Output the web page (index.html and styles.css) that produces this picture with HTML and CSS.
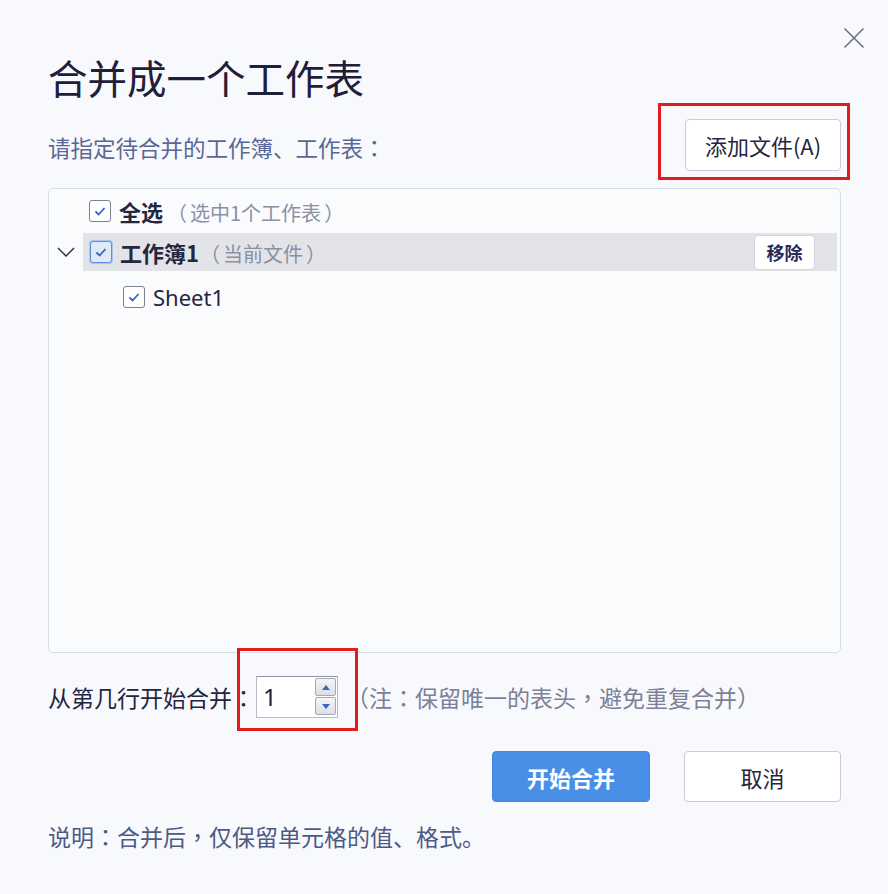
FILE: index.html
```html
<!DOCTYPE html>
<html lang="zh-CN">
<head>
<meta charset="utf-8">
<title>合并成一个工作表</title>
<link rel="stylesheet" href="styles.css">
</head>
<body>
<div class="dialog">
  <div class="close-row">
    <svg class="close" width="22" height="22" viewBox="0 0 22 22"><path d="M1.5 1.5 L20.5 20.5 M20.5 1.5 L1.5 20.5" stroke="#6a6a82" stroke-width="1.5" fill="none"/></svg>
  </div>
  <div class="title">合并成一个工作表</div>
  <div class="sub-row">
    <div class="subtitle">请指定待合并的工作簿、工作表<span class="pc" lang="zh-TW">：</span></div>
    <div class="annot-wrap">
      <button class="btn btn-plain add-btn">添加文件(A)</button>
      <div class="annot annot-add"></div>
    </div>
  </div>
  <div class="list">
    <div class="row row-all">
      <div class="spacer"></div>
      <div class="item">
        <span class="cb"><svg width="20" height="20" viewBox="0 0 20 20"><path d="M5.5 10.5 L8.6 13.5 L14.5 7" stroke="#2f66c8" stroke-width="1.8" fill="none"/></svg></span>
        <span class="text"><span class="label">全选</span><span class="hint hint-all"><span class="pc po" lang="zh-TW">（</span>选中1个工作表<span class="pc pcl" lang="zh-TW">）</span></span></span>
      </div>
    </div>
    <div class="row row-book">
      <div class="spacer"><svg width="18" height="10" viewBox="0 0 18 10"><path d="M1 1 L9 9 L17 1" stroke="#33334a" stroke-width="1.5" fill="none"/></svg></div>
      <div class="item band">
        <span class="cb cb-focus"><svg width="20" height="20" viewBox="0 0 20 20"><path d="M5.5 10.5 L8.6 13.5 L14.5 7" stroke="#2f66c8" stroke-width="1.8" fill="none"/></svg></span>
        <span class="text"><span class="label">工作簿1</span><span class="hint"><span class="pc po" lang="zh-TW">（</span>当前文件<span class="pc pcl" lang="zh-TW">）</span></span></span>
        <button class="remove">移除</button>
      </div>
    </div>
    <div class="row row-sheet">
      <div class="spacer"></div>
      <div class="item indent">
        <span class="cb"><svg width="20" height="20" viewBox="0 0 20 20"><path d="M5.5 10.5 L8.6 13.5 L14.5 7" stroke="#2f66c8" stroke-width="1.8" fill="none"/></svg></span>
        <span class="sheet">Sheet1</span>
      </div>
    </div>
  </div>
  <div class="merge-row"><span class="merge-label">从第几行开始合并<span class="pc" lang="zh-TW">：</span></span><span class="annot-wrap spin-wrap"><span class="spin"><span class="spin-val">1</span><span class="spin-btns"><span class="spin-btn"><svg width="8" height="5" viewBox="0 0 8 5"><path d="M0 5 L4 0 L8 5 Z" fill="#3a66c0"/></svg></span><span class="spin-btn"><svg width="8" height="5" viewBox="0 0 8 5"><path d="M0 0 L4 5 L8 0 Z" fill="#3a66c0"/></svg></span></span></span><span class="annot annot-spin"></span></span><span class="merge-note"><span class="pc" lang="zh-TW">（</span>注<span class="pc" lang="zh-TW">：</span>保留唯一的表头<span class="pc" lang="zh-TW">，</span>避免重复合并<span class="pc" lang="zh-TW">）</span></span></div>
  <div class="actions">
    <button class="btn btn-primary">开始合并</button>
    <button class="btn btn-plain cancel">取消</button>
  </div>
  <div class="desc">说明<span class="pc" lang="zh-TW">：</span>合并后<span class="pc" lang="zh-TW">，</span>仅保留单元格的值、格式。</div>
</div>
</body>
</html>
```
FILE: styles.css
```css
html, body {
  margin: 0;
  padding: 0;
  background: #f8f9fc;
}
body {
  font-family: "Noto Sans CJK SC", "Noto Sans", sans-serif;
  color: #25253f;
}
.pc {
  font-family: "Noto Sans CJK TC", "Noto Sans CJK SC", sans-serif;
}
.dialog {
  width: 888px;
  height: 894px;
  box-sizing: border-box;
  padding: 0 47px 0 48px;
  display: flex;
  flex-direction: column;
}
.close-row {
  display: flex;
  justify-content: flex-end;
  padding-top: 27px;
  height: 22px;
  margin-right: -24px;
}
.close { display: block; }
.title {
  margin-top: 8px;
  height: 40px;
  line-height: 40px;
  font-size: 39.5px;
  font-weight: 400;
  color: #1f2038;
}
.sub-row {
  margin-top: 22px;
  height: 52px;
  display: flex;
  align-items: center;
  justify-content: space-between;
}
.subtitle {
  font-size: 22.5px;
  color: #5a6796;
  padding-top: 4px;
}
.annot-wrap {
  position: relative;
  display: flex;
}
.annot {
  position: absolute;
  border: 3px solid #df1d1d;
  pointer-events: none;
}
.annot-add { top: -16px; bottom: -9px; left: -27px; right: -9px; }
.annot-spin { top: -28px; bottom: -13px; left: -19px; right: -20px; }
.btn {
  font-family: "Noto Sans CJK SC", "Noto Sans", sans-serif;
  font-size: 22px;
  border-radius: 4px;
  height: 51px;
  padding: 0;
  box-sizing: border-box;
  cursor: pointer;
}
.btn-plain {
  background: #ffffff;
  border: 1px solid #c9ccd6;
  color: #25253f;
}
.add-btn {
  width: 156px;
  height: 52px;
}
.list {
  margin-top: 17px;
  height: 465px;
  box-sizing: border-box;
  border: 1px solid #d9dde6;
  border-radius: 5px;
  background: #fafbfd;
  padding: 3px 3px 0 0;
  display: flex;
  flex-direction: column;
}
.row {
  display: flex;
  height: 38px;
}
.row-book { margin-top: 3px; }
.row-sheet { margin-top: 7px; }
.spacer {
  width: 34px;
  flex: none;
  display: flex;
  align-items: center;
  justify-content: center;
}
.item {
  flex: 1;
  display: flex;
  align-items: center;
  padding-left: 6px;
}
.band {
  background: #e3e4e8;
  padding-left: 7px;
}
.indent { padding-left: 40px; }
.cb {
  width: 20px;
  height: 20px;
  border: 1px solid #7b8093;
  border-radius: 3px;
  background: #ffffff;
  display: flex;
  flex: none;
}
.cb-focus {
  border-color: #5b8fe0;
  background: #dfe9f8;
  box-shadow: 0 0 0 1px #a9c4ee;
}
.text {
  margin-left: 8px;
  white-space: nowrap;
}
.label {
  font-size: 22px;
  font-weight: 700;
  color: #26263f;
}
.hint {
  margin-left: 1px;
  font-size: 20px;
  color: #8a90a6;
}
.hint-all { margin-left: 4px; }
.po { padding-right: 3px; }
.pcl { padding-left: 3px; }
.sheet {
  margin-left: 8px;
  font-family: "Noto Sans", sans-serif;
  font-size: 22px;
  color: #25253f;
}
.remove {
  margin-left: auto;
  margin-right: 22px;
  width: 61px;
  height: 35px;
  background: #ffffff;
  border: 1px solid #d2d4dc;
  border-radius: 4px;
  font-family: "Noto Sans CJK SC", sans-serif;
  font-size: 18px;
  font-weight: 700;
  color: #2a2a50;
  padding: 0;
}
.merge-row {
  margin-top: 19px;
  height: 44px;
  line-height: 44px;
  white-space: nowrap;
}
.merge-label {
  display: inline-block;
  vertical-align: middle;
  font-size: 23px;
  color: #25253f;
  width: 208px;
}
.spin-wrap {
  display: inline-flex;
  vertical-align: middle;
}
.spin {
  width: 82px;
  height: 42px;
  box-sizing: border-box;
  border: 1px solid #b8bcc8;
  border-top-color: #8f93a3;
  background: #ffffff;
  display: flex;
  align-items: center;
  justify-content: space-between;
  padding: 0 1px 0 6px;
  line-height: normal;
}
.spin-val {
  font-family: "Noto Sans", sans-serif;
  font-size: 24px;
  color: #1f2038;
}
.spin-btns {
  display: flex;
  flex-direction: column;
  gap: 1px;
}
.spin-btn {
  width: 21px;
  height: 18px;
  box-sizing: border-box;
  border: 1px solid #a5a9b6;
  border-radius: 2px;
  background: linear-gradient(#f4f5f8, #dcdee4);
  display: flex;
  align-items: center;
  justify-content: center;
}
.merge-note {
  vertical-align: middle;
  margin-left: 8px;
  font-size: 23px;
  color: #7c8098;
}
.actions {
  margin-top: 35px;
  display: flex;
  justify-content: flex-end;
  gap: 34px;
}
.btn-primary {
  width: 158px;
  background: #4a8fe6;
  border: 1px solid #4287e0;
  color: #ffffff;
  font-weight: 700;
}
.cancel { width: 157px; }
.desc {
  margin-top: 21px;
  font-size: 23px;
  line-height: 26px;
  color: #4e5a85;
}
```
